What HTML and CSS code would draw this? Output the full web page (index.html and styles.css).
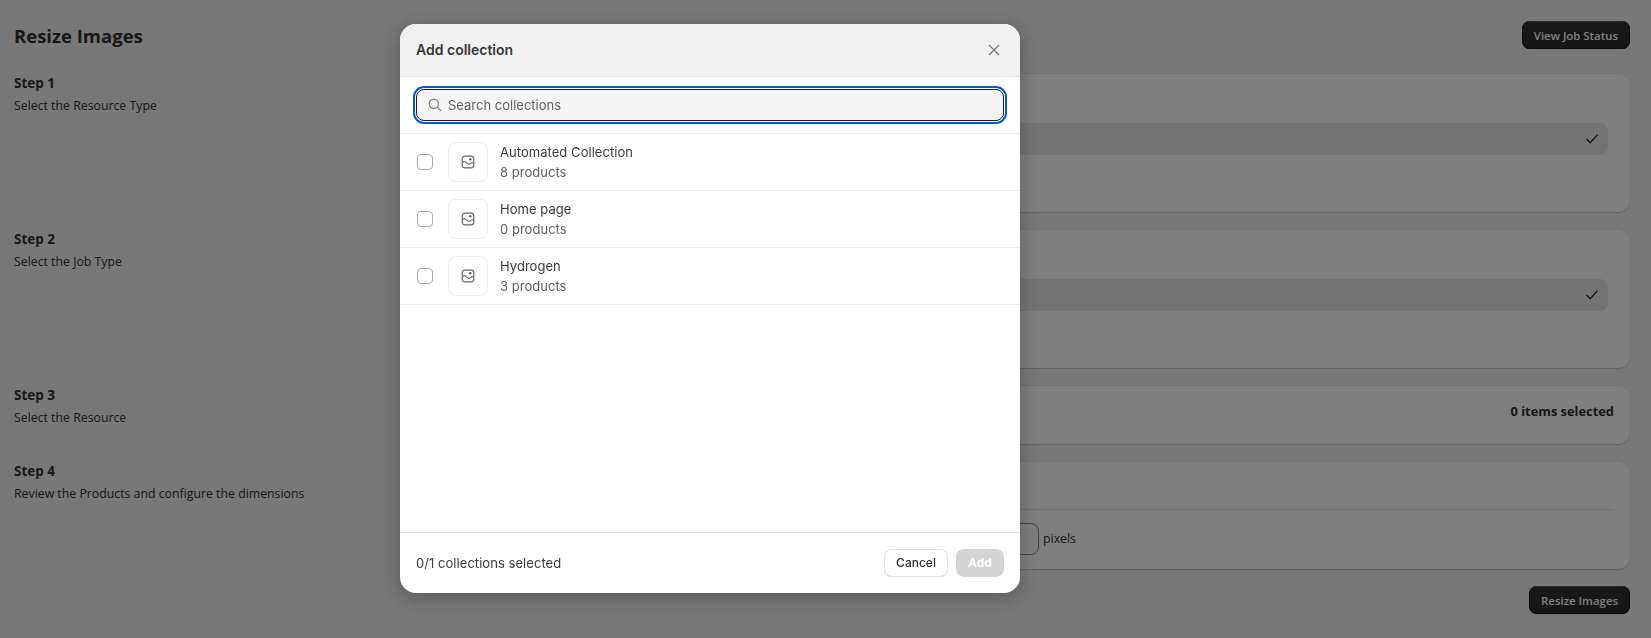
FILE: index.html
```html
<!DOCTYPE html>
<html lang="en">
<head>
<meta charset="utf-8">
<title>Resize Images</title>
<link rel="stylesheet" href="styles.css">
</head>
<body>
<main class="page">
  <header class="page-head">
    <h1>Resize Images</h1>
    <button class="btn-dark">View Job Status</button>
  </header>
  <section class="step">
    <div class="step-info"><h2>Step 1</h2><p>Select the Resource Type</p></div>
    <div class="card card-select">
      <div class="select-bar"><svg class="check" viewBox="0 0 16 16"><path d="M2.5 8 6.2 11.8 13.5 3.6"/></svg></div>
    </div>
  </section>
  <section class="step">
    <div class="step-info"><h2>Step 2</h2><p>Select the Job Type</p></div>
    <div class="card card-select">
      <div class="select-bar"><svg class="check" viewBox="0 0 16 16"><path d="M2.5 8 6.2 11.8 13.5 3.6"/></svg></div>
    </div>
  </section>
  <section class="step">
    <div class="step-info"><h2>Step 3</h2><p>Select the Resource</p></div>
    <div class="card card-resource"><strong>0 items selected</strong></div>
  </section>
  <section class="step">
    <div class="step-info"><h2>Step 4</h2><p>Review the Products and configure the dimensions</p></div>
    <div class="card card-dims">
      <div class="dims-row"><span class="dims-input"></span><span class="dims-unit">pixels</span></div>
    </div>
  </section>
  <footer class="page-foot"><button class="btn-dark">Resize Images</button></footer>
</main>

<div class="overlay">
  <div class="modal" role="dialog" aria-label="Add collection">
    <div class="modal-head">
      <h3>Add collection</h3>
      <svg class="close" viewBox="0 0 12 12"><path d="M1 1l10 10M11 1 1 11"/></svg>
    </div>
    <div class="modal-search">
      <div class="search-box">
        <svg class="search-icon" viewBox="0 0 14 14"><circle cx="5.8" cy="5.8" r="4.6"/><path d="M9.2 9.2 13 13"/></svg>
        <span>Search collections</span>
      </div>
    </div>
    <ul class="list">
      <li class="row">
        <span class="checkbox"></span>
        <span class="thumb"><svg viewBox="0 0 14 14"><rect x="1.2" y="1.2" width="11.6" height="11.6" rx="2.8"/><path d="M1.5 7.4c1.2-1.2 2.4-1 3.4 0 1.2 1.2 2.6 2.6 4 1.6 1.2-.8 2.4-1.8 3.6-1"/><circle class="dot" cx="9.4" cy="4.2" r="1.2"/></svg></span>
        <span class="row-text"><span class="name">Automated Collection</span><span class="count">8 products</span></span>
      </li>
      <li class="row">
        <span class="checkbox"></span>
        <span class="thumb"><svg viewBox="0 0 14 14"><rect x="1.2" y="1.2" width="11.6" height="11.6" rx="2.8"/><path d="M1.5 7.4c1.2-1.2 2.4-1 3.4 0 1.2 1.2 2.6 2.6 4 1.6 1.2-.8 2.4-1.8 3.6-1"/><circle class="dot" cx="9.4" cy="4.2" r="1.2"/></svg></span>
        <span class="row-text"><span class="name">Home page</span><span class="count">0 products</span></span>
      </li>
      <li class="row">
        <span class="checkbox"></span>
        <span class="thumb"><svg viewBox="0 0 14 14"><rect x="1.2" y="1.2" width="11.6" height="11.6" rx="2.8"/><path d="M1.5 7.4c1.2-1.2 2.4-1 3.4 0 1.2 1.2 2.6 2.6 4 1.6 1.2-.8 2.4-1.8 3.6-1"/><circle class="dot" cx="9.4" cy="4.2" r="1.2"/></svg></span>
        <span class="row-text"><span class="name">Hydrogen</span><span class="count">3 products</span></span>
      </li>
    </ul>
    <div class="modal-foot">
      <span class="selected">0/1 collections selected</span>
      <div class="actions">
        <button class="btn-cancel">Cancel</button>
        <button class="btn-add">Add</button>
      </div>
    </div>
  </div>
</div>
</body>
</html>
```
FILE: styles.css
```css
* { box-sizing: border-box; }
html, body { margin: 0; height: 100%; overflow: hidden; }
body {
  background: #f0f0f0;
  color: #303030;
  font-family: "Open Sans", "Noto Sans", sans-serif;
  font-size: 12.3px;
}
h1, h2, h3, p, ul { margin: 0; padding: 0; }
button { font: inherit; border: 0; }

.page { padding: 21px 21px 0 14px; }
.page-head {
  display: flex;
  justify-content: space-between;
  align-items: center;
  height: 28px;
  margin-bottom: 25px;
}
.page-head h1 { font-size: 18.5px; font-weight: 700; line-height: 28px; margin-top: 1px; }

.btn-dark {
  display: block;
  height: 28px;
  padding: 0 12px;
  border-radius: 8px;
  background: linear-gradient(#303030, #2c2c2c);
  box-shadow: inset 0 1px 0 #5a5a5a, inset 0 0 0 1px #111;
  color: #fff;
  font-size: 11.4px;
  font-weight: 600;
}

.step {
  display: grid;
  grid-template-columns: 480px 1fr;
  gap: 0 16px;
  margin-bottom: 18px;
}
.step-info h2 { font-size: 13.5px; font-weight: 700; line-height: 18px; }
.step-info p { line-height: 18px; margin-top: 5px; }

.card {
  background: #fff;
  border-radius: 12px;
  margin-right: .5px;
  box-shadow: 0 0 0 .5px rgba(0,0,0,.08), 0 1px 1px rgba(0,0,0,.14);
}
.card-select { height: 138px; padding: 49px 21.5px 0 16px; }
.select-bar {
  display: flex;
  align-items: center;
  justify-content: flex-end;
  height: 32px;
  padding-right: 8px;
  background: #e9e9e9;
  border-radius: 8px;
}
.check { width: 16px; height: 16px; fill: none; stroke: #303030; stroke-width: 1.4; }

.card-resource { height: 58px; padding: 15px 15.5px 0 0; text-align: right; font-size: 12.85px; line-height: 20px; }
.card-resource strong { font-weight: 700; }

.card-dims { height: 107px; padding: 47px 15.5px 0 16px; }
.dims-row {
  display: flex;
  align-items: center;
  gap: 4px;
  padding: 13px 0 0 359px;
  border-top: 1px solid #e3e3e3;
}
.dims-input { width: 154px; height: 32px; border: 1px solid #8a8a8a; border-radius: 8px; }
.dims-unit { line-height: 18px; }

.page-foot { display: flex; justify-content: flex-end; margin-top: -1px; }

.overlay {
  position: fixed;
  inset: 0;
  background: rgba(0,0,0,.5);
  display: flex;
  justify-content: center;
  align-items: flex-start;
  padding: 24px 231px 0 0;
}
.modal {
  width: 620px;
  height: 569px;
  display: flex;
  flex-direction: column;
  background: #fff;
  border-radius: 16px;
  overflow: hidden;
  box-shadow: 0 4px 20px rgba(0,0,0,.28);
  font-family: Inter, "Noto Sans", sans-serif;
  font-size: 13px;
  color: #303030;
}
.modal-head {
  flex: none;
  height: 53px;
  display: flex;
  justify-content: space-between;
  align-items: center;
  padding: 0 20px 0 16px;
  background: #f1f1f1;
  border-bottom: 1px solid #e3e3e3;
}
.modal-head h3 { font-size: 14px; font-weight: 600; line-height: 20px; color: #363636; }
.close { width: 12px; height: 12px; fill: none; stroke: #7a7a7a; stroke-width: 1.3; }

.modal-search { flex: none; height: 57px; padding: 12px 16px 0; border-bottom: 1px solid #ebebeb; }
.search-box {
  display: flex;
  align-items: center;
  gap: 6px;
  height: 32px;
  padding-left: 11px;
  background: #f5f5f5;
  border: 1px solid #1a1a1a;
  border-radius: 8px;
  outline: 2px solid #005bd3;
  outline-offset: 1px;
  color: #616161;
  line-height: 18px;
}
.search-icon { width: 14px; height: 14px; fill: none; stroke: #7a7a7a; stroke-width: 1.2; }

.list { flex: 1; list-style: none; }
.row {
  display: flex;
  align-items: center;
  height: 57px;
  padding-left: 17px;
  border-bottom: 1px solid #ebebeb;
}
.checkbox {
  width: 16px;
  height: 16px;
  border: 1px solid #a8a8a8;
  border-radius: 4px;
  background: #fff;
}
.thumb {
  display: flex;
  align-items: center;
  justify-content: center;
  width: 40px;
  height: 40px;
  margin: 0 12px 0 15px;
  border: 1px solid #ebebeb;
  border-radius: 8px;
}
.thumb svg { width: 14px; height: 14px; fill: none; stroke: #666; stroke-width: 1.2; }
.thumb .dot { fill: #666; stroke: none; }
.row-text { display: flex; flex-direction: column; gap: 2px; }
.name { line-height: 18px; letter-spacing: .05px; color: #3a3a3a; }
.count { line-height: 18px; color: #616161; letter-spacing: .03px; }

.modal-foot {
  flex: none;
  height: 61px;
  display: flex;
  justify-content: space-between;
  align-items: center;
  padding: 0 16px;
  border-top: 1px solid #e3e3e3;
}
.selected { line-height: 18px; letter-spacing: .05px; color: #3a3a3a; }
.actions { display: flex; gap: 8px; }
.btn-cancel, .btn-add { height: 28px; border-radius: 8px; font-size: 12px; font-weight: 500; padding: 0 0 2px; }
.btn-cancel {
  width: 64px;
  background: #fff;
  color: #303030;
  box-shadow: inset 0 0 0 1px #e3e3e3, inset 0 -1px 0 #b5b5b5;
}
.btn-add { width: 48px; background: #d4d4d4; color: #fff; font-weight: 700; }
```
